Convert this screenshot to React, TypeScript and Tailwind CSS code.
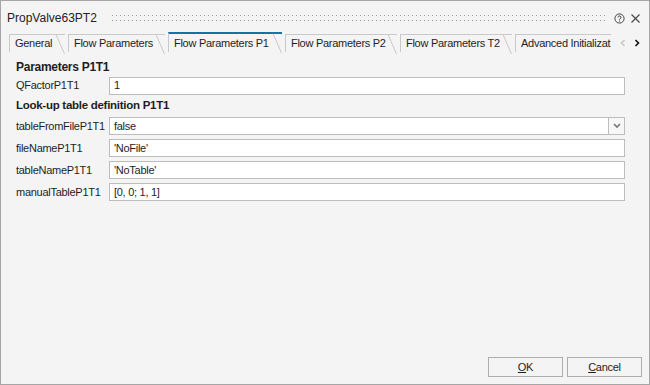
import React from "react";

const tabs = [
  { label: "General", w: "w-[56px]" },
  { label: "Flow Parameters", w: "w-[97px]" },
  { label: "Flow Parameters P1", w: "w-[114px]", active: true },
  { label: "Flow Parameters P2", w: "w-[112px]" },
  { label: "Flow Parameters T2", w: "w-[112px]" },
];

const rows = [
  { label: "tableFromFileP1T1", value: "false", select: true },
  { label: "fileNameP1T1", value: "'NoFile'" },
  { label: "tableNameP1T1", value: "'NoTable'" },
  { label: "manualTableP1T1", value: "[0, 0; 1, 1]" },
];

function Tab({ label, w, active }: { label: string; w: string; active?: boolean }) {
  return (
    <div className={`relative flex ${w} ${active ? "h-[20px] border-t-2 border-t-[#1273a6]" : "h-[18px] border-t border-t-[#c9c9c9]"} border-l border-l-[#c9c9c9] items-center pl-[5px] shrink-0`}>
      <span className="whitespace-nowrap">{label}</span>
      <svg className="absolute right-0 top-[-1px] h-[20px] w-[9px]" viewBox="0 0 9 20" preserveAspectRatio="none">
        <line x1="0" y1="0.5" x2="8.5" y2="20" stroke="#c9c9c9" strokeWidth="1" />
      </svg>
    </div>
  );
}

function Field({ value }: { value: string }) {
  return (
    <div className="flex-1 h-[18px] border border-[#bdbdbd] bg-white pl-[4px] flex items-center">
      {value}
    </div>
  );
}

export default function App() {
  return (
    <div
      className="w-[650px] h-[385px] bg-[#f4f4f4] border border-[#a6a6a6] flex flex-col text-[11px] tracking-tight text-[#1e1e1e] overflow-hidden"
      style={{ fontFamily: '"Liberation Sans", Arial, sans-serif' }}
    >
      {/* title bar */}
      <div className="flex items-center h-[30px] pl-[6px] pr-[8px] pt-[4px]">
        <span className="text-[12px] text-[#222] tracking-normal">PropValve63PT2</span>
        <svg className="ml-[14px] h-[8px] flex-1" preserveAspectRatio="none">
          <defs>
            <pattern id="grip" width="4" height="5" patternUnits="userSpaceOnUse">
              <rect x="1" y="1" width="1" height="1" fill="#9a9a9a" />
            </pattern>
          </defs>
          <rect width="100%" height="100%" fill="url(#grip)" />
        </svg>
        <svg className="ml-[6px]" width="11" height="11" viewBox="0 0 11 11">
          <circle cx="5.5" cy="5.5" r="4.6" fill="none" stroke="#444" strokeWidth="1" />
          <path d="M4 4.4a1.5 1.5 0 1 1 2.1 1.4c-.4.2-.6.5-.6.9v.3" fill="none" stroke="#444" strokeWidth="1" />
          <rect x="5" y="7.6" width="1" height="1" fill="#444" />
        </svg>
        <svg className="ml-[5px]" width="11" height="11" viewBox="0 0 11 11">
          <path d="M1.5 1.5l8 8M9.5 1.5l-8 8" stroke="#444" strokeWidth="1.1" />
        </svg>
      </div>

      {/* tabs */}
      <div className="flex items-end h-[21px] pl-[8px] gap-[3px]">
        {tabs.map((t) => (
          <Tab key={t.label} label={t.label} w={t.w} active={t.active} />
        ))}
        <div className="flex h-[18px] w-[96px] border-t border-l border-[#c9c9c9] items-center pl-[5px] overflow-hidden shrink-0">
          <span className="whitespace-nowrap">Advanced Initializat</span>
        </div>
        <div className="flex items-center h-[18px] gap-[8px] pl-[6px]">
          <svg width="6" height="8" viewBox="0 0 6 8">
            <path d="M4.5 1L1.5 4l3 3" fill="none" stroke="#c8c8c8" strokeWidth="1.6" />
          </svg>
          <svg width="6" height="8" viewBox="0 0 6 8">
            <path d="M1.5 1l3 3-3 3" fill="none" stroke="#111" strokeWidth="1.6" />
          </svg>
        </div>
      </div>

      {/* content */}
      <div className="flex-1 flex flex-col pl-[15px] pr-[24px] pt-[5px]">
        <div className="font-bold text-[12px] h-[19px] flex items-center">Parameters P1T1</div>
        <div className="flex items-center h-[19px]">
          <span className="w-[93px]">QFactorP1T1</span>
          <Field value="1" />
        </div>
        <div className="font-bold text-[11.5px] h-[20px] mt-[1px] flex items-center">Look-up table definition P1T1</div>
        <div className="flex flex-col gap-[4px] mt-[1px]">
          {rows.map((r) => (
            <div key={r.label} className="flex items-center h-[18px]">
              <span className="w-[93px] whitespace-nowrap">{r.label}</span>
              {r.select ? (
                <div className="flex-1 flex h-[18px] border border-[#bdbdbd] bg-white">
                  <div className="flex-1 pl-[4px] flex items-center">{r.value}</div>
                  <div className="w-[16px] border-l border-[#bdbdbd] bg-[#f7f7f7] flex items-center justify-center">
                    <svg width="8" height="6" viewBox="0 0 8 6">
                      <path d="M1 1l3 3 3-3" fill="none" stroke="#777" strokeWidth="1.6" />
                    </svg>
                  </div>
                </div>
              ) : (
                <Field value={r.value} />
              )}
            </div>
          ))}
        </div>

        <div className="mt-auto mb-[7px] flex justify-end gap-[4px] mr-[-17px]">
          <button className="w-[75px] h-[20px] border border-[#adadad] bg-[#f4f4f4] text-[11px]">
            <span className="underline">O</span>K
          </button>
          <button className="w-[75px] h-[20px] border border-[#adadad] bg-[#f4f4f4] text-[11px]">
            <span className="underline">C</span>ancel
          </button>
        </div>
      </div>
    </div>
  );
}
